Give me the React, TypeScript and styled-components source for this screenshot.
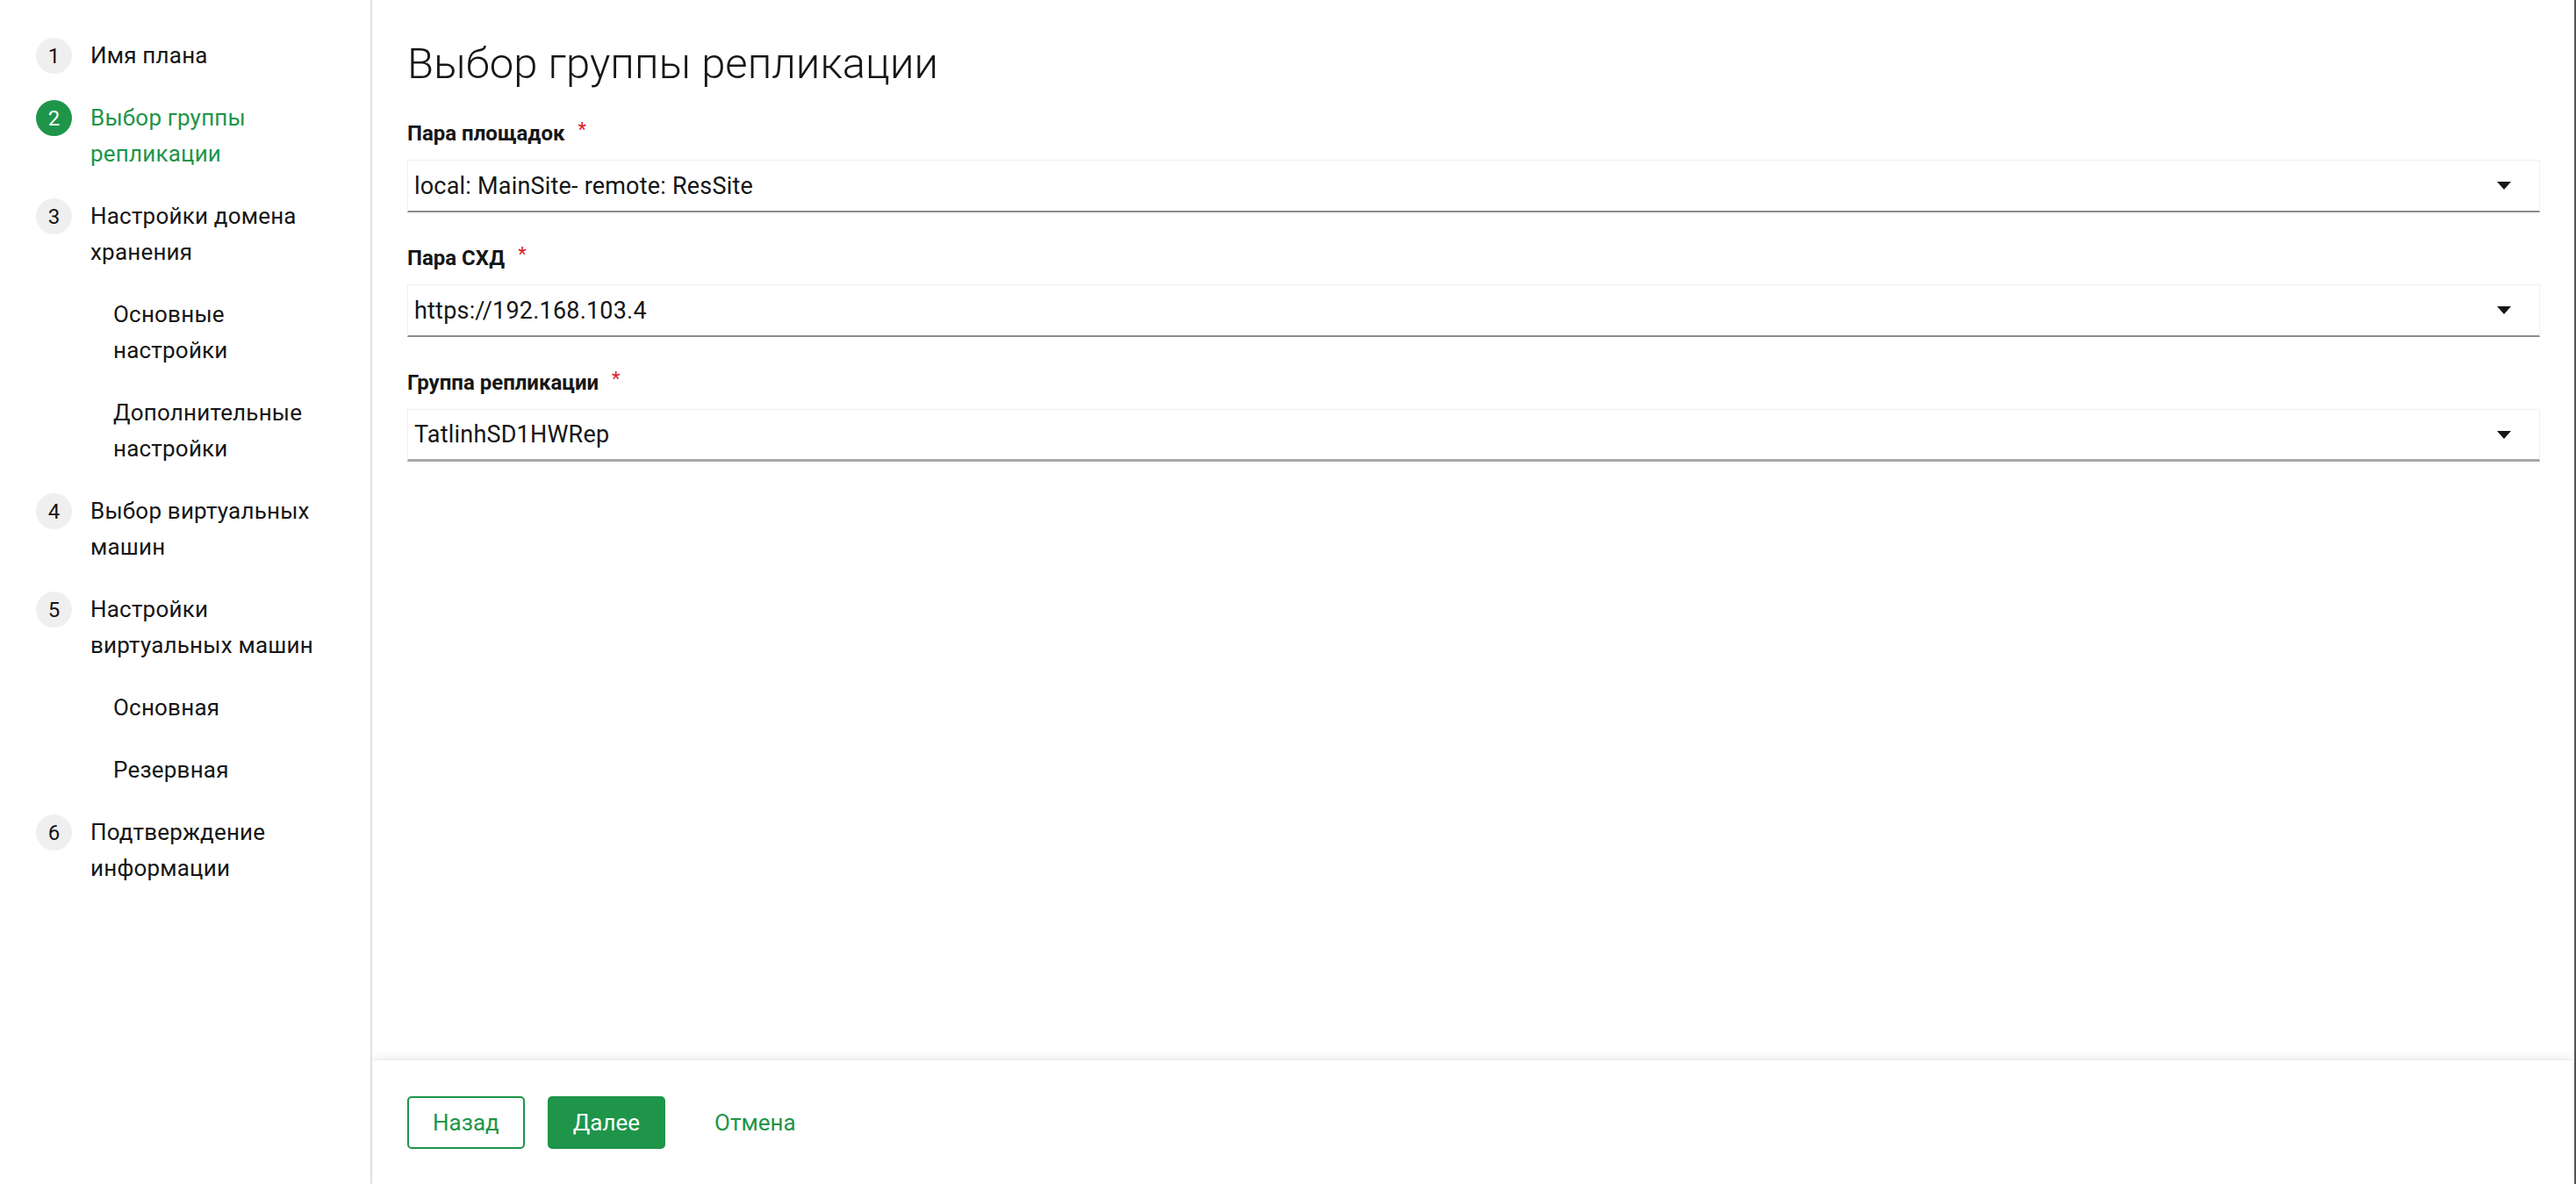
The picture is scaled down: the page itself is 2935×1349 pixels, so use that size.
import React from "react";
import styled, { createGlobalStyle } from "styled-components";

const GREEN = "#1e9549";
const TEXT = "#161616";
const FONT = `"Roboto", "Noto Sans", "Liberation Sans", sans-serif`;

const Global = createGlobalStyle`
  html, body { margin: 0; padding: 0; background: #ffffff; }
  body { font-family: ${FONT}; color: ${TEXT}; }
  * { box-sizing: border-box; }
`;

const Page = styled.div`
  display: flex;
  height: 100vh;
  width: 100%;
  border-right: 2px solid #545454;
  background: #ffffff;
`;

const Sidebar = styled.nav`
  width: 424px;
  flex: 0 0 424px;
  border-right: 2px solid #e2e2e2;
  padding: 28px 41px 0 41px;
  display: flex;
  flex-direction: column;
`;

const StepItem = styled.div<{ $sub?: boolean }>`
  display: flex;
  align-items: flex-start;
  gap: 21px;
  padding: 15px 0 15px ${(p) => (p.$sub ? "88px" : "0")};
`;

const StepCircle = styled.div<{ $active?: boolean }>`
  width: 41px;
  height: 41px;
  flex: 0 0 41px;
  border-radius: 50%;
  display: flex;
  align-items: center;
  justify-content: center;
  font-size: 24px;
  background: ${(p) => (p.$active ? GREEN : "#efefef")};
  color: ${(p) => (p.$active ? "#ffffff" : TEXT)};
`;

const StepLabel = styled.div<{ $active?: boolean }>`
  font-size: 26px;
  line-height: 41px;
  letter-spacing: 0.2px;
  white-space: nowrap;
  color: ${(p) => (p.$active ? GREEN : TEXT)};
`;

const Main = styled.main`
  flex: 1;
  display: flex;
  flex-direction: column;
  min-width: 0;
`;

const Content = styled.section`
  flex: 1;
  padding: 39px 39px 0 40px;
`;

const Title = styled.h1`
  margin: 0 0 30px 0;
  font-size: 49px;
  line-height: 68px;
  font-weight: 300;
  color: ${TEXT};
`;

const Field = styled.div`
  display: flex;
  flex-direction: column;
  margin-bottom: 37px;
`;

const Label = styled.label`
  font-size: 24px;
  line-height: 30px;
  font-weight: 700;
  color: ${TEXT};
  margin-bottom: 15px;
  display: flex;
  align-items: flex-start;
  gap: 15px;
`;

const Required = styled.span`
  color: #da1e28;
  font-weight: 400;
  font-size: 22px;
  line-height: 22px;
`;

const SelectBox = styled.div<{ $strong?: boolean }>`
  height: 60px;
  display: flex;
  align-items: center;
  justify-content: space-between;
  padding: 0 32px 0 7px;
  background: #ffffff;
  border: 1px solid #f0f0f0;
  border-bottom: ${(p) => (p.$strong ? "3px solid #a8a8a8" : "2px solid #8d8d8d")};
  font-size: 27px;
  letter-spacing: 0.2px;
  color: ${TEXT};
`;

const Caret = styled.svg`
  width: 16px;
  height: 9px;
  flex: 0 0 auto;
`;

const Footer = styled.footer`
  height: 142px;
  flex: 0 0 142px;
  display: flex;
  align-items: center;
  gap: 26px;
  padding: 0 40px;
  background: #ffffff;
  box-shadow: 0 -5px 9px -2px rgba(0, 0, 0, 0.07);
  border-top: 1px solid #eeeeee;
`;

const Button = styled.button<{ $variant: "outline" | "primary" | "ghost" }>`
  height: 60px;
  padding: 0 ${(p) => (p.$variant === "ghost" ? "28px" : "27px")};
  font-family: ${FONT};
  font-size: 26px;
  border-radius: 5px;
  cursor: pointer;
  border: 2px solid ${(p) => (p.$variant === "ghost" ? "transparent" : GREEN)};
  background: ${(p) => (p.$variant === "primary" ? GREEN : "#ffffff")};
  color: ${(p) => (p.$variant === "primary" ? "#ffffff" : GREEN)};
`;

type Step = { num?: number; lines: string[]; active?: boolean; sub?: boolean };

const steps: Step[] = [
  { num: 1, lines: ["Имя плана"] },
  { num: 2, lines: ["Выбор группы", "репликации"], active: true },
  { num: 3, lines: ["Настройки домена", "хранения"] },
  { lines: ["Основные", "настройки"], sub: true },
  { lines: ["Дополнительные", "настройки"], sub: true },
  { num: 4, lines: ["Выбор виртуальных", "машин"] },
  { num: 5, lines: ["Настройки", "виртуальных машин"] },
  { lines: ["Основная"], sub: true },
  { lines: ["Резервная"], sub: true },
  { num: 6, lines: ["Подтверждение", "информации"] },
];

const fields = [
  { label: "Пара площадок", value: "local: MainSite- remote: ResSite" },
  { label: "Пара СХД", value: "https://192.168.103.4" },
  { label: "Группа репликации", value: "TatlinhSD1HWRep", strong: true },
];

export default function App() {
  return (
    <>
      <Global />
      <Page>
        <Sidebar>
          {steps.map((s, i) => (
            <StepItem key={i} $sub={s.sub}>
              {s.num !== undefined && <StepCircle $active={s.active}>{s.num}</StepCircle>}
              <StepLabel $active={s.active}>
                {s.lines.map((l, j) => (
                  <React.Fragment key={j}>
                    {j > 0 && <br />}
                    {l}
                  </React.Fragment>
                ))}
              </StepLabel>
            </StepItem>
          ))}
        </Sidebar>
        <Main>
          <Content>
            <Title>Выбор группы репликации</Title>
            {fields.map((f) => (
              <Field key={f.label}>
                <Label>
                  {f.label}
                  <Required>*</Required>
                </Label>
                <SelectBox $strong={f.strong}>
                  <span>{f.value}</span>
                  <Caret viewBox="0 0 16 9">
                    <path d="M0 0 H16 L8 9 Z" fill="#161616" />
                  </Caret>
                </SelectBox>
              </Field>
            ))}
          </Content>
          <Footer>
            <Button $variant="outline">Назад</Button>
            <Button $variant="primary">Далее</Button>
            <Button $variant="ghost">Отмена</Button>
          </Footer>
        </Main>
      </Page>
    </>
  );
}
